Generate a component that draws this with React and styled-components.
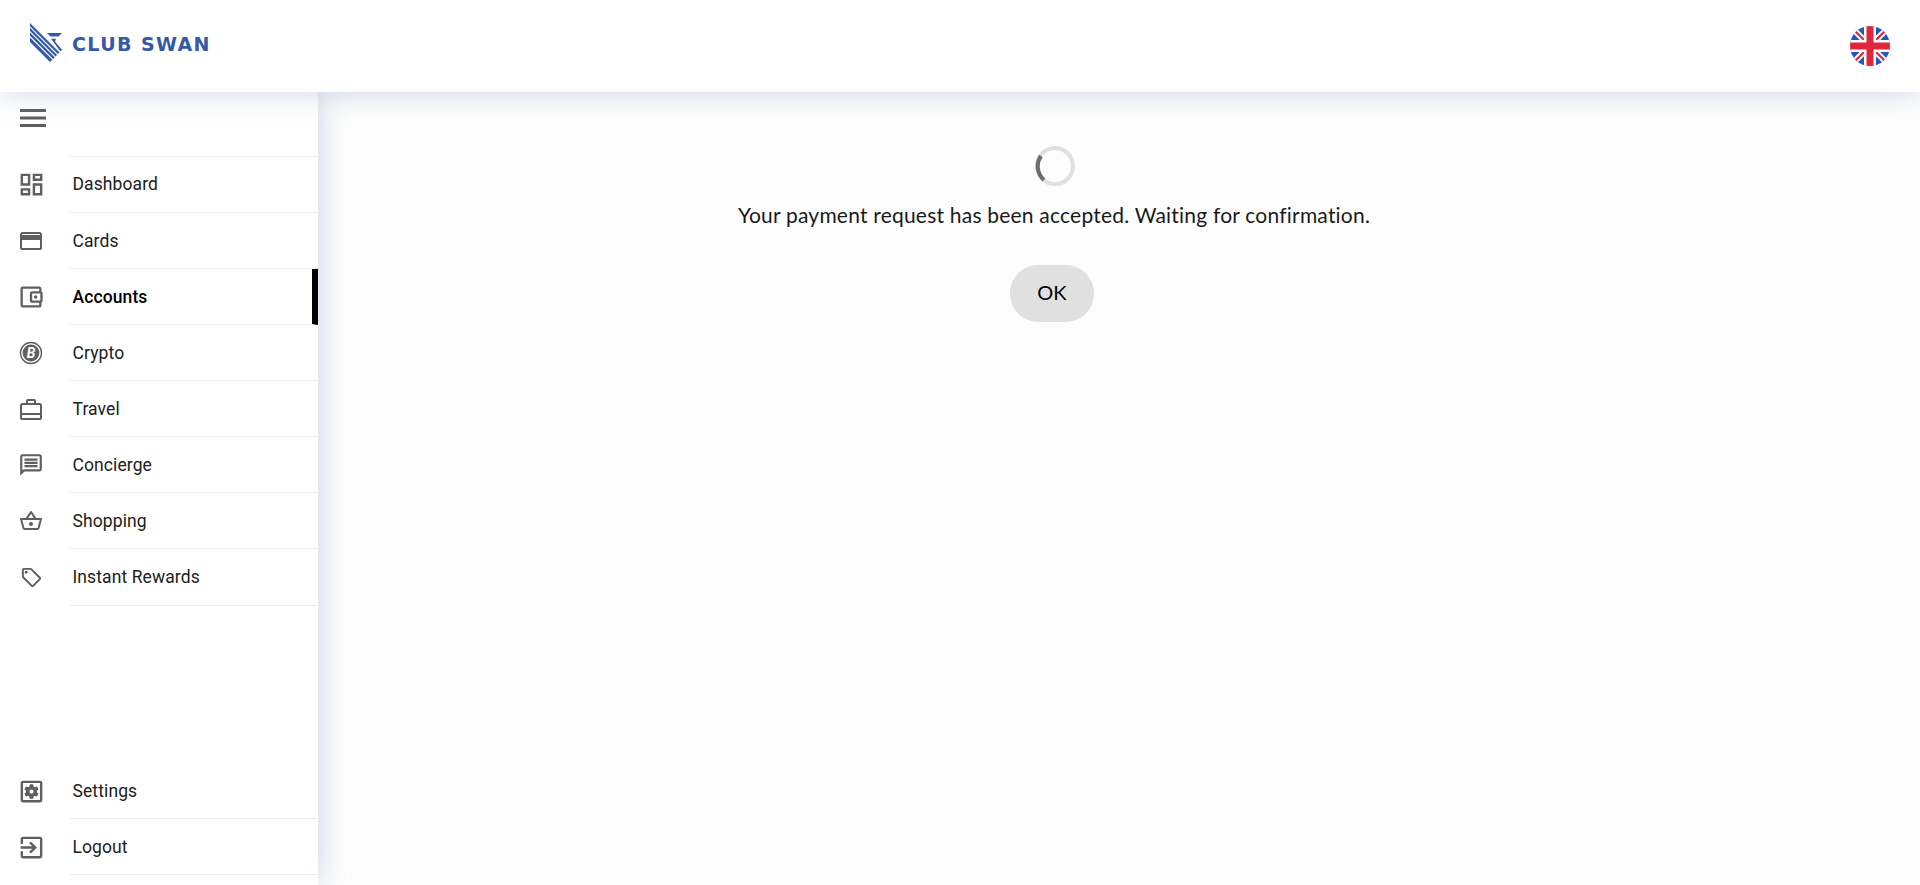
import React from "react";
import styled, { createGlobalStyle } from "styled-components";
import {
	MdOutlineDashboard,
	MdOutlineAccountBalanceWallet,
	MdOutlineMessage,
	MdOutlineShoppingBasket,
	MdOutlineLocalOffer,
	MdOutlineSettingsApplications,
	MdOutlineExitToApp,
} from "react-icons/md";

const GlobalStyle = createGlobalStyle`
	html, body, #root {
		height: 100%;
	}
	body {
		margin: 0;
		background: #fdfdfd;
		font-family: Roboto, sans-serif;
		overflow: hidden;
	}
`;

const Page = styled.div`
	display: flex;
	flex-direction: column;
	height: 885px;
`;

const Header = styled.header`
	position: relative;
	z-index: 2;
	flex: none;
	display: flex;
	align-items: center;
	justify-content: space-between;
	height: 92px;
	padding: 0 30px;
	background: #fff;
	box-shadow: 0 0 30px rgba(120, 145, 185, 0.38);
`;

const Logo = styled.div`
	display: flex;
	align-items: center;
	gap: 10px;
	margin-top: -7px;
`;

const LogoText = styled.span`
	margin-top: 2px;
	color: #3359a7;
	font-family: "DejaVu Sans", sans-serif;
	font-weight: 700;
	font-size: 19px;
	letter-spacing: 1.4px;
	white-space: nowrap;
`;

const Body = styled.div`
	flex: 1;
	display: flex;
	min-height: 0;
`;

const Sidebar = styled.nav`
	position: relative;
	z-index: 1;
	flex: none;
	display: flex;
	flex-direction: column;
	justify-content: space-between;
	width: 318px;
	padding-bottom: 10px;
	box-sizing: border-box;
	background: #fff;
	box-shadow: 0 0 30px rgba(120, 145, 185, 0.38);
`;

const Burger = styled.button`
	display: block;
	width: 100%;
	height: 64px;
	padding: 0 0 10px 20px;
	border: 0;
	background: transparent;
	text-align: left;
`;

const NavList = styled.ul`
	margin: 0;
	padding: 0;
	list-style: none;
`;

const NavItem = styled.li`
	display: flex;
	align-items: center;
	height: 56.125px;
	padding-left: 16px;
	color: ${ p => p.$active ? "#000" : "#212121" };
	&:first-child {
		height: 56.625px;
	}
`;

const BottomItem = styled( NavItem )`
	height: 56px;
	&:first-child {
		height: 56px;
	}
`;

const IconSlot = styled.span`
	flex: none;
	display: flex;
	align-items: center;
	justify-content: center;
	width: 30px;
	margin-right: 24px;
	color: #5f5f5f;
`;

const NavLabel = styled.span`
	flex: 1;
	align-self: stretch;
	display: flex;
	align-items: center;
	padding: ${ p => p.$first ? "0" : "1px" } 0 0 2.5px;
	border-top: ${ p => p.$first ? "1px solid #ececec" : "0" };
	border-bottom: 1px solid #ececec;
	border-right: ${ p => p.$active ? "6px solid #000" : "0" };
	font-size: 17.5px;
	letter-spacing: 0.1px;
	font-weight: ${ p => p.$active ? 500 : 400 };
`;

const Main = styled.main`
	flex: 1;
	padding: 54px 0 0 420px;
	background: #fdfdfd;
`;

const Status = styled.div`
	display: flex;
	flex-direction: column;
	align-items: center;
	width: 632px;
`;

const Spinner = styled.svg`
	display: block;
	width: 40px;
	height: 40px;
	margin-left: 2px;
`;

const Message = styled.p`
	margin: 17px 0 38px;
	color: #1a1a1a;
	font-family: Lato, sans-serif;
	font-size: 21px;
	letter-spacing: 0.21px;
	line-height: 24px;
	white-space: nowrap;
`;

const OkButton = styled.button`
	width: 84px;
	height: 57px;
	margin-right: 4px;
	padding: 0 0 3px;
	border: 0;
	border-radius: 28px;
	background: #e0e0e0;
	color: #000;
	font-family: Lato, sans-serif;
	font-size: 20px;
`;

const LogoMark = () => (
	<svg width="32" height="39" viewBox="0 0 32 39" fill="#3359a7">
		<path d="M0 0 L29.5 29.5 L27.9 31.1 L0 3.2 Z" />
		<path d="M0 4.8 L27.1 31.9 L25.5 33.5 L0 8 Z" />
		<path d="M0 9.6 L24.7 34.3 L23.1 35.9 L0 12.8 Z" />
		<path d="M0 14.4 L22.3 36.7 L20 39 L0 19 Z" />
		<path d="M17 10 H32 L28.5 13.5 H20.5 Z" />
		<path d="M21 15.8 H26 L25 18.6 L32 26.8 L30.5 28.5 Z" />
	</svg>
);

const FlagUK = () => (
	<svg width="40" height="40" viewBox="0 0 40 40">
		<defs>
			<clipPath id="flag-circle"><circle cx="20" cy="20" r="20" /></clipPath>
		</defs>
		<g clipPath="url(#flag-circle)">
			<rect width="40" height="40" fill="#2458b4" />
			<path d="M0 0 L40 40 M40 0 L0 40" stroke="#fff" strokeWidth="6" />
			<path d="M0 0 L40 40 M40 0 L0 40" stroke="#e0263c" strokeWidth="2.2" />
			<rect x="14" width="12" height="40" fill="#fff" />
			<rect y="14" width="40" height="12" fill="#fff" />
			<rect x="16.5" width="7" height="40" fill="#e0263c" />
			<rect y="16.5" width="40" height="7" fill="#e0263c" />
		</g>
	</svg>
);

const CryptoIcon = () => (
	<svg width="24" height="24" viewBox="0 0 24 24">
		<circle cx="12" cy="12" r="10.5" fill="none" stroke="#5f5f5f" strokeWidth="1.4" />
		<circle cx="12" cy="12" r="8.4" fill="#5f5f5f" />
		<text x="12" y="17" textAnchor="middle" fill="#fff" fontFamily="Roboto, sans-serif" fontWeight="700" fontStyle="italic" fontSize="14">B</text>
	</svg>
);

const CardIcon = () => (
	<svg width="22" height="18" viewBox="0 0 22 18">
		<rect x="1" y="1" width="20" height="16" rx="1.6" fill="none" stroke="currentColor" strokeWidth="2" />
		<rect x="1" y="3" width="20" height="5" fill="currentColor" />
	</svg>
);

const BriefcaseIcon = () => (
	<svg width="22" height="21" viewBox="0 0 22 21" fill="none" stroke="currentColor" strokeWidth="2">
		<rect x="1" y="5" width="20" height="15" rx="1.6" />
		<path d="M7 5 V2 a1 1 0 0 1 1 -1 H14 a1 1 0 0 1 1 1 V5" />
		<path d="M1 15 H21" />
	</svg>
);

const primaryItems = [
	{ label: "Dashboard", icon: <MdOutlineDashboard size={29} /> },
	{ label: "Cards", icon: <CardIcon /> },
	{ label: "Accounts", icon: <MdOutlineAccountBalanceWallet size={28} />, active: true },
	{ label: "Crypto", icon: <CryptoIcon /> },
	{ label: "Travel", icon: <BriefcaseIcon /> },
	{ label: "Concierge", icon: <MdOutlineMessage size={26} /> },
	{ label: "Shopping", icon: <MdOutlineShoppingBasket size={24} /> },
	{ label: "Instant Rewards", icon: <MdOutlineLocalOffer size={23} /> },
];

const secondaryItems = [
	{ label: "Settings", icon: <MdOutlineSettingsApplications size={29} /> },
	{ label: "Logout", icon: <MdOutlineExitToApp size={29} /> },
];

export default function App() {
	return (
		<Page>
			<GlobalStyle />
			<Header>
				<Logo>
					<LogoMark />
					<LogoText>CLUB SWAN</LogoText>
				</Logo>
				<FlagUK />
			</Header>
			<Body>
				<Sidebar>
					<div>
						<Burger aria-label="menu">
							<svg width="26" height="18" viewBox="0 0 26 18" fill="#5f5f5f">
								<rect width="26" height="3" />
								<rect y="7.5" width="26" height="3" />
								<rect y="15" width="26" height="3" />
							</svg>
						</Burger>
						<NavList>
							{primaryItems.map( ( item, index ) => (
								<NavItem key={item.label} $active={item.active}>
									<IconSlot>{item.icon}</IconSlot>
									<NavLabel $active={item.active} $first={index === 0}>{item.label}</NavLabel>
								</NavItem>
							) )}
						</NavList>
					</div>
					<NavList>
						{secondaryItems.map( item => (
							<BottomItem key={item.label}>
								<IconSlot>{item.icon}</IconSlot>
								<NavLabel>{item.label}</NavLabel>
							</BottomItem>
						) )}
					</NavList>
				</Sidebar>
				<Main>
					<Status>
						<Spinner viewBox="0 0 40 40">
							<circle cx="20" cy="20" r="18" fill="none" stroke="#e0e0e0" strokeWidth="4" />
							<path d="M9 34 A18 18 0 0 1 6 10" fill="none" stroke="#6b6b6b" strokeWidth="4" />
						</Spinner>
						<Message>Your payment request has been accepted. Waiting for confirmation.</Message>
						<OkButton>OK</OkButton>
					</Status>
				</Main>
			</Body>
		</Page>
	);
}
